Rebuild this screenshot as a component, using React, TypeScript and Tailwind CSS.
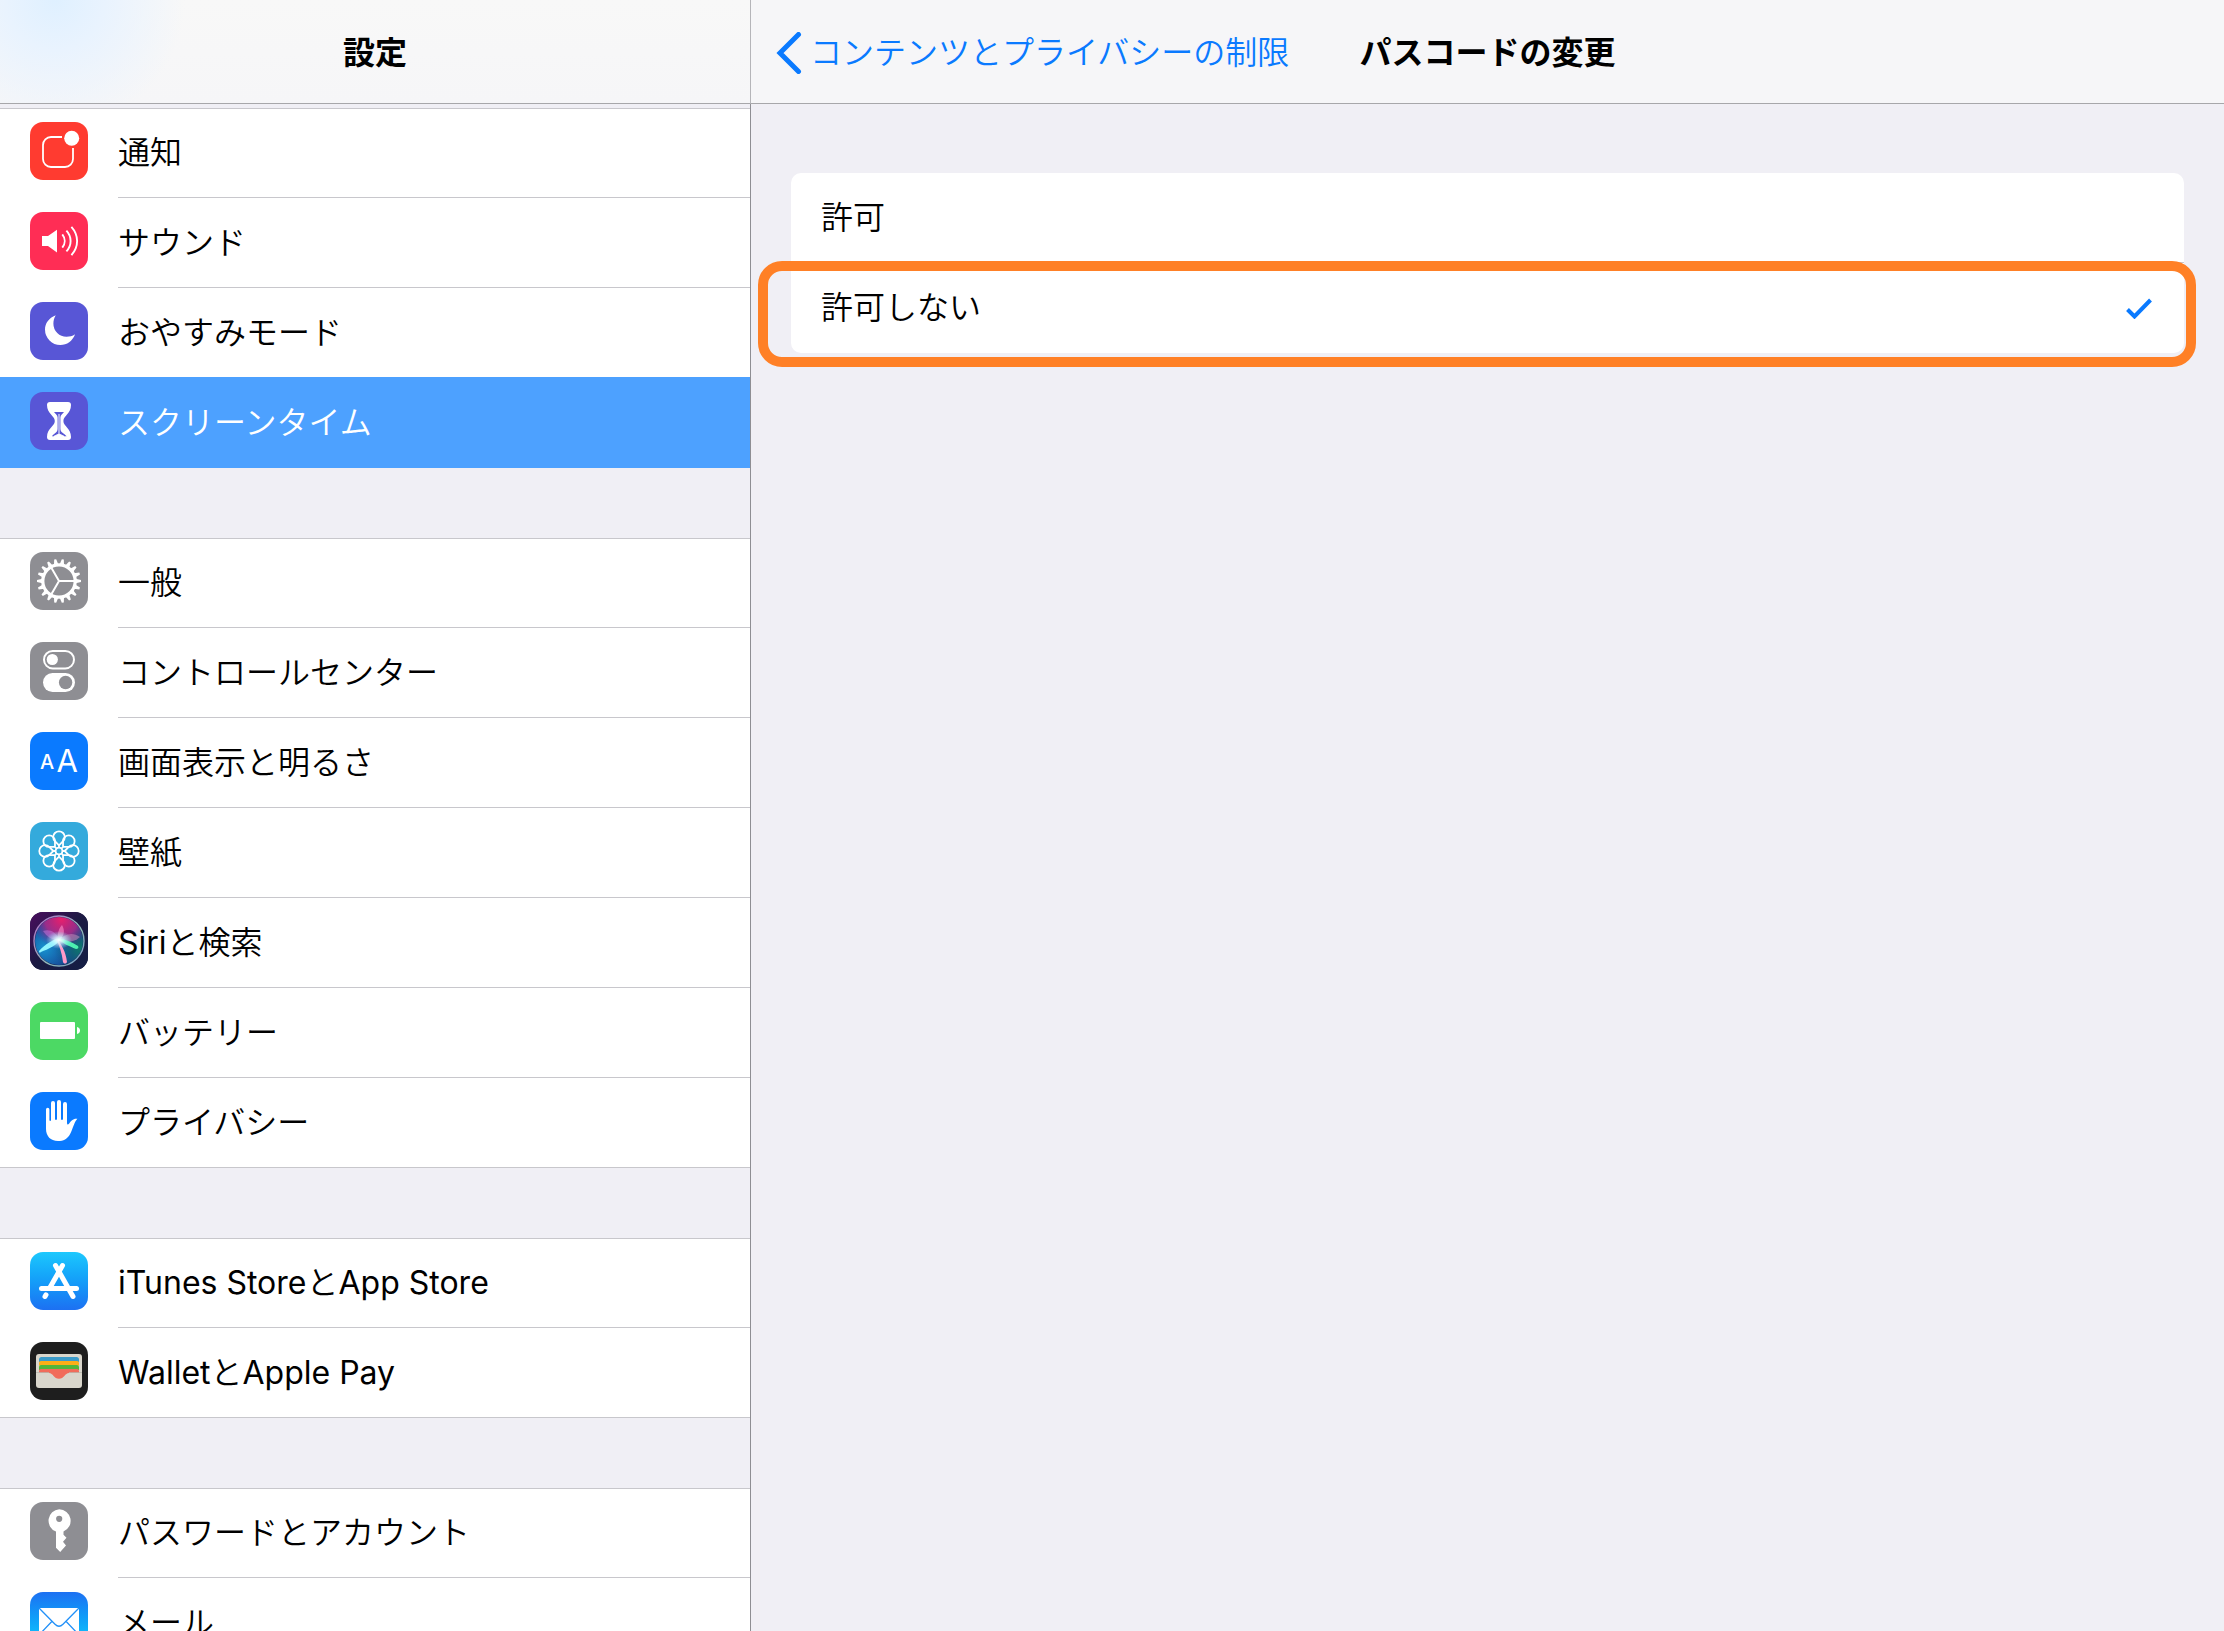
import { useState } from "react";
import type { ReactNode } from "react";
import clsx from "clsx";

type Item = { label: string; icon: ReactNode; tile: string };

const gearTeeth = Array.from({ length: 18 }, (_, i) => i * 20);
const petals = Array.from({ length: 8 }, (_, i) => i * 45);

const NotificationIcon = () => (
  <>
    <path
      d="M32 15H21a8 8 0 0 0-8 8v14a8 8 0 0 0 8 8h14a8 8 0 0 0 8-8V26"
      fill="none"
      stroke="#fff"
      strokeWidth="1.8"
    />
    <circle cx="41.7" cy="16.3" r="7.5" fill="#fff" />
  </>
);

const SoundIcon = () => (
  <>
    <path d="M12 24h6l9-6.2v22.6L18 34h-6z" fill="#fff" />
    <g fill="none" stroke="#fff" strokeWidth="1.9">
      <path d="M32.3 22.4c3.2 4 3.2 9.2 0 13.2" />
      <path d="M36.4 18.6c5.6 6 5.6 14.8 0 20.8" />
      <path d="M41.4 14.8c7.6 8.4 7.6 20 0 28.4" />
    </g>
  </>
);

const MoonIcon = () => (
  <path
    d="M25.7 13.3C18.6 16 15 21.6 15 27.6A15.4 15.4 0 0 0 30.4 43c6.6 0 12-3.8 14.7-10.7-2.6 1.8-5.6 2.5-8.5 2.5A13 13 0 0 1 23.4 21.8c0-3.2.8-5.9 2.3-8.5z"
    fill="#fff"
  />
);

const HourglassIcon = () => (
  <>
    <path
      d="M20 10h18a3 3 0 0 1 3 3c0 9-7.6 10.5-7.6 16S41 36 41 45a3 3 0 0 1-3 3H20a3 3 0 0 1-3-3c0-9 7.8-10.5 7.8-16S17 22 17 13a3 3 0 0 1 3-3z"
      fill="#fff"
    />
    <path
      d="M24 20h10c-1.2 2-3.6 3-3.6 5.5v11c0 4.5 3.6 4.5 6.2 7.8H21.8c2.6-3.3 5.8-3.3 5.8-7.8v-11C27.6 23 25.2 22 24 20z"
      fill="#5856d6"
    />
    <path
      d="M29 22v21M24 44.4c2-1.4 3.6-1.8 5-2.2 1.4.4 3 .8 5 2.2z"
      fill="#fff"
      stroke="#fff"
      strokeWidth="1"
    />
  </>
);

const GearIcon = () => (
  <g stroke="#fff" fill="none">
    <circle cx="29" cy="29" r="16.2" strokeWidth="3.2" />
    {gearTeeth.map((deg) => (
      <path
        key={deg}
        d="M45.5 26.8l5.5 1.2v2l-5.5 1.2z"
        fill="#fff"
        stroke="none"
        transform={`rotate(${deg} 29 29)`}
      />
    ))}
    <path d="M29 29h15M29 29l-7.5-13M29 29l-7.5 13" strokeWidth="2" />
  </g>
);

const ControlIcon = () => (
  <>
    <rect x="14" y="9" width="30" height="17.4" rx="8.7" fill="none" stroke="#fff" strokeWidth="2" />
    <circle cx="22.3" cy="17.5" r="5.6" fill="#fff" />
    <rect x="13" y="31" width="32" height="19" rx="9.5" fill="#fff" />
    <circle cx="35.6" cy="40.5" r="6.7" fill="#8e8e93" />
  </>
);

const DisplayIcon = () => (
  <g fill="#fff" fontFamily="Inter, sans-serif" textAnchor="middle">
    <text x="17" y="37" fontSize="20" fontWeight="500">
      A
    </text>
    <text x="37.3" y="39.6" fontSize="31">
      A
    </text>
  </g>
);

const WallpaperIcon = () => (
  <g fill="none" stroke="#fff" strokeWidth="1.8">
    {petals.map((deg) => (
      <path
        key={deg}
        d="M29 25.6V23.3L24.9 19.2a5.8 5.8 0 1 1 8.2 0L29 23.3"
        transform={`rotate(${deg} 29 29)`}
      />
    ))}
    <circle cx="29" cy="29" r="3.4" />
  </g>
);

const SiriIcon = () => (
  <>
    <defs>
      <linearGradient id="siri-bg" x1="0" y1="0" x2="1" y2="1">
        <stop offset="0" stopColor="#4a0d5e" />
        <stop offset="0.5" stopColor="#1b1a42" />
        <stop offset="1" stopColor="#141f45" />
      </linearGradient>
      <radialGradient id="siri-pink" cx="0.55" cy="0.05" r="0.62">
        <stop offset="0" stopColor="#e81f6c" />
        <stop offset="0.55" stopColor="#b02888" stopOpacity="0.85" />
        <stop offset="1" stopColor="#5c2a9a" stopOpacity="0" />
      </radialGradient>
      <radialGradient id="siri-teal" cx="0.95" cy="0.65" r="0.55">
        <stop offset="0" stopColor="#0e7a68" />
        <stop offset="1" stopColor="#0e6a78" stopOpacity="0" />
      </radialGradient>
      <radialGradient id="siri-blue" cx="0.2" cy="0.65" r="0.6">
        <stop offset="0" stopColor="#1792d0" />
        <stop offset="1" stopColor="#163c8c" />
      </radialGradient>
      <radialGradient id="siri-glow">
        <stop offset="0" stopColor="#fff" />
        <stop offset="0.35" stopColor="#d8fbff" stopOpacity="0.8" />
        <stop offset="1" stopColor="#8fe8ff" stopOpacity="0" />
      </radialGradient>
      <linearGradient id="siri-ring" x1="0" y1="0" x2="1" y2="1">
        <stop offset="0" stopColor="#b06cc8" />
        <stop offset="0.6" stopColor="#8fb8b8" />
        <stop offset="1" stopColor="#6f9cc8" />
      </linearGradient>
    </defs>
    <rect width="58" height="58" fill="url(#siri-bg)" />
    <circle cx="29" cy="29" r="24" fill="url(#siri-blue)" />
    <circle cx="29" cy="29" r="24" fill="url(#siri-teal)" />
    <circle cx="29" cy="29" r="24" fill="url(#siri-pink)" />
    <path d="M30 29C26 19 19 17 13 19c4 6 9 9 17 10z" fill="#c87ae0" opacity="0.5" />
    <path d="M28 29c-1-8 1-13 4-16 3 5 3 11-4 16z" fill="#ff8cc8" opacity="0.6" />
    <path d="M28 29c7-8 15-9 22-4-5 5-14 6-22 4z" fill="#c58ab8" opacity="0.55" />
    <path d="M32 25c-8 2-17 7-23 14 0 2 1 2 2 1 7-3 16-6 21-15z" fill="#8ff4ff" />
    <path d="M27 26c8 1 15 4 21 8 1 2 0 3-2 3-7-3-13-5-19-11z" fill="#4df0b0" />
    <path d="M26 26c5 5 10 14 11 24-1 2-3 2-4 0-1-9-4-17-7-24z" fill="#ff9ac8" />
    <ellipse cx="29" cy="28" rx="13" ry="9" fill="url(#siri-glow)" />
    <circle cx="29" cy="29" r="25" fill="none" stroke="url(#siri-ring)" strokeWidth="1.4" />
  </>
);

const BatteryIcon = () => (
  <g fill="#fff">
    <rect x="10" y="20" width="35" height="17" rx="1" />
    <path d="M47 25c4 .5 4 6.5 0 7z" />
  </g>
);

const HandIcon = () => (
  <path
    d="M16 17.5a1.7 1.7 0 0 1 3.4 0V28c0 1.2 1.6 1.2 1.6 0V11a2 2 0 0 1 4 0v16c0 1.2 2 1.2 2 0V10a2 2 0 0 1 4 0v17c0 1.2 2 1.2 2 0V12a2 2 0 0 1 4 0v18.5c0 2.3 1 2.5 2 1.2 2.2-3 4-5.5 8.4-5-3.4 3.3-4.4 10-7.4 15.5C37.3 47 33.5 49 28 49c-7.5 0-12-5-12-12z"
    fill="#fff"
  />
);

const AppStoreIcon = () => (
  <g fill="none" stroke="#fff" strokeWidth="5" strokeLinecap="round">
    <path d="M11.5 36.5h35" />
    <path d="M32.5 13.5L20 35.5" />
    <path d="M25.5 13.5L43 44.5" />
    <path d="M16 42.8l-1 1.7" />
  </g>
);

const WalletIcon = () => (
  <>
    <rect x="6" y="12" width="46" height="34" rx="3" fill="#d9d6cc" />
    <path d="M9 20v-2.5A2.5 2.5 0 0 1 11.5 15h35a2.5 2.5 0 0 1 2.5 2.5V20z" fill="#3c9bc9" />
    <path d="M9 23.5V21a2 2 0 0 1 2-2h36a2 2 0 0 1 2 2v2.5z" fill="#fdae17" />
    <path d="M9 28v-3a2 2 0 0 1 2-2h36a2 2 0 0 1 2 2v3z" fill="#52b63b" />
    <path
      d="M9 31v-2a2 2 0 0 1 2-2h36a2 2 0 0 1 2 2v2H39c-4 0-5 5.8-10 5.8S23 31 19 31z"
      fill="#f16c5b"
    />
    <path d="M6 30.5h13M39 30.5h13" stroke="#b9b6ac" strokeWidth="0.8" />
  </>
);

const KeyIcon = () => (
  <>
    <path
      d="M29.2 7.2a11.6 11.6 0 0 1 4.3 22.3v3.2l3 3-3.5 4 3 3.8L30.2 50 26 45.8V29.6A11.6 11.6 0 0 1 29.2 7.2z"
      fill="#fff"
    />
    <circle cx="29.2" cy="16.8" r="3.1" fill="#8e8e93" />
  </>
);

const MailIcon = () => (
  <>
    <rect x="9" y="16" width="40" height="27" fill="#fff" />
    <g fill="none" stroke="#2391f8" strokeWidth="1.3">
      <path d="M9 16l16 16.3c2.6 2.6 5.4 2.6 8 0L49 16" />
      <path d="M21.8 29.5L9 43M36.2 29.5L49 43" />
    </g>
  </>
);

const groups: Item[][] = [
  [
    { label: "通知", icon: <NotificationIcon />, tile: "bg-[#ff3b30]" },
    { label: "サウンド", icon: <SoundIcon />, tile: "bg-[#ff2d55]" },
    { label: "おやすみモード", icon: <MoonIcon />, tile: "bg-[#5856d6]" },
    { label: "スクリーンタイム", icon: <HourglassIcon />, tile: "bg-[#5856d6]" },
  ],
  [
    { label: "一般", icon: <GearIcon />, tile: "bg-[#8e8e93]" },
    { label: "コントロールセンター", icon: <ControlIcon />, tile: "bg-[#8e8e93]" },
    { label: "画面表示と明るさ", icon: <DisplayIcon />, tile: "bg-[#0a7aff]" },
    { label: "壁紙", icon: <WallpaperIcon />, tile: "bg-[#34aadc]" },
    { label: "Siriと検索", icon: <SiriIcon />, tile: "bg-[#1b1a42]" },
    { label: "バッテリー", icon: <BatteryIcon />, tile: "bg-[#4cd964]" },
    { label: "プライバシー", icon: <HandIcon />, tile: "bg-[#0a7aff]" },
  ],
  [
    { label: "iTunes StoreとApp Store", icon: <AppStoreIcon />, tile: "bg-linear-to-b from-[#1ec8fd] to-[#1d70f2]" },
    { label: "WalletとApple Pay", icon: <WalletIcon />, tile: "bg-[#1e1e1e]" },
  ],
  [
    { label: "パスワードとアカウント", icon: <KeyIcon />, tile: "bg-[#8e8e93]" },
    { label: "メール", icon: <MailIcon />, tile: "bg-linear-to-b from-[#1d70f2] to-[#1ad3fd]" },
  ],
];

function MenuRow({ item, active, last }: { item: Item; active: boolean; last: boolean }) {
  return (
    <a
      href="#"
      aria-current={active ? "page" : undefined}
      className={clsx(
        "flex pl-[30px]",
        active ? "relative -mt-px h-[91px] bg-[#4da1ff] text-white" : "h-[90px]",
        last && !active && "border-b border-[#c8c7cc]",
      )}
    >
      <span
        className={clsx(
          "size-[58px] shrink-0 overflow-hidden rounded-[13px]",
          active ? "mt-[15px]" : "mt-3.5",
          item.tile,
        )}
      >
        <svg viewBox="0 0 58 58" className="size-full" aria-hidden="true">
          {item.icon}
        </svg>
      </span>
      <span className={clsx("ml-[30px] flex flex-1 items-center", !last && "border-b border-[#c8c7cc]")}>
        {item.label}
      </span>
    </a>
  );
}

function Sidebar() {
  return (
    <aside className="flex w-[751px] shrink-0 flex-col">
      <header className="flex h-[104px] shrink-0 items-center justify-center border-r border-b border-r-[#b5b5b9] border-b-[#a7a7aa] bg-[radial-gradient(circle_at_55px_0px,#dff0ff_0,#e9f3fe_50px,#f6f6f800_130px),linear-gradient(#f8f8f8,#f6f6f8)] pt-0.5">
        <h1 className="font-['Inter','Noto_Sans_CJK_JP',sans-serif] font-bold">設定</h1>
      </header>
      <nav className="flex flex-1 flex-col gap-[70px] overflow-hidden border-r border-[#8e8e93] pt-1">
        {groups.map((group, g) => (
          <div key={g} className="shrink-0 bg-white shadow-[inset_0_1px_#c8c7cc]">
            {group.map((item, i) => (
              <MenuRow
                key={item.label}
                item={item}
                active={item.label === "スクリーンタイム"}
                last={i === group.length - 1}
              />
            ))}
          </div>
        ))}
      </nav>
    </aside>
  );
}

function PasscodePane() {
  const [choice, setChoice] = useState("許可しない");

  return (
    <main className="flex min-w-0 flex-1 flex-col">
      <header className="grid h-[104px] shrink-0 grid-cols-[1fr_auto_1fr] items-center border-b border-[#a7a7aa] bg-[#f6f6f8] pt-0.5">
        <button type="button" className="flex items-center gap-2 pl-[25px] text-[#0a7aff]">
          <svg viewBox="0 0 26 42" className="h-[42px] w-[26px]" fill="none" aria-hidden="true">
            <path
              d="M22.5 2.5L4 21l18.5 18.5"
              stroke="currentColor"
              strokeWidth="5"
              strokeLinecap="round"
            />
          </svg>
          コンテンツとプライバシーの制限
        </button>
        <h2 className="font-['Inter','Noto_Sans_CJK_JP',sans-serif] font-bold">パスコードの変更</h2>
      </header>
      <fieldset className="mx-10 mt-[69px] rounded-[10px] bg-white">
        {["許可", "許可しない"].map((option, i) => (
          <label key={option} className="relative flex h-[90px] pl-[30px]">
            <input
              type="radio"
              name="passcode-change"
              className="sr-only"
              checked={choice === option}
              onChange={() => setChoice(option)}
            />
            <span
              className={clsx(
                "flex flex-1 items-center justify-between pr-[31px]",
                i === 0 && "border-b border-[#c8c7cc]",
              )}
            >
              {option}
              {choice === option && (
                <svg viewBox="0 0 28 22" className="h-[22px] w-7" fill="none" aria-hidden="true">
                  <path d="M2.5 12.5l7 7L25.5 3" stroke="#0a7aff" strokeWidth="4" />
                </svg>
              )}
            </span>
            {i === 1 && (
              <span className="pointer-events-none absolute -top-0.5 -right-3 -bottom-3.5 -left-[33px] rounded-[24px] border-10 border-[#ff8026]" />
            )}
          </label>
        ))}
      </fieldset>
    </main>
  );
}

export default function App() {
  return (
    <div
      lang="ja"
      className="flex h-screen overflow-hidden bg-[#f0eff5] font-['Inter','Noto_Sans_CJK_JP_DemiLight','Noto_Sans_CJK_JP',sans-serif] text-[32px] leading-none text-black"
    >
      <Sidebar />
      <PasscodePane />
    </div>
  );
}
